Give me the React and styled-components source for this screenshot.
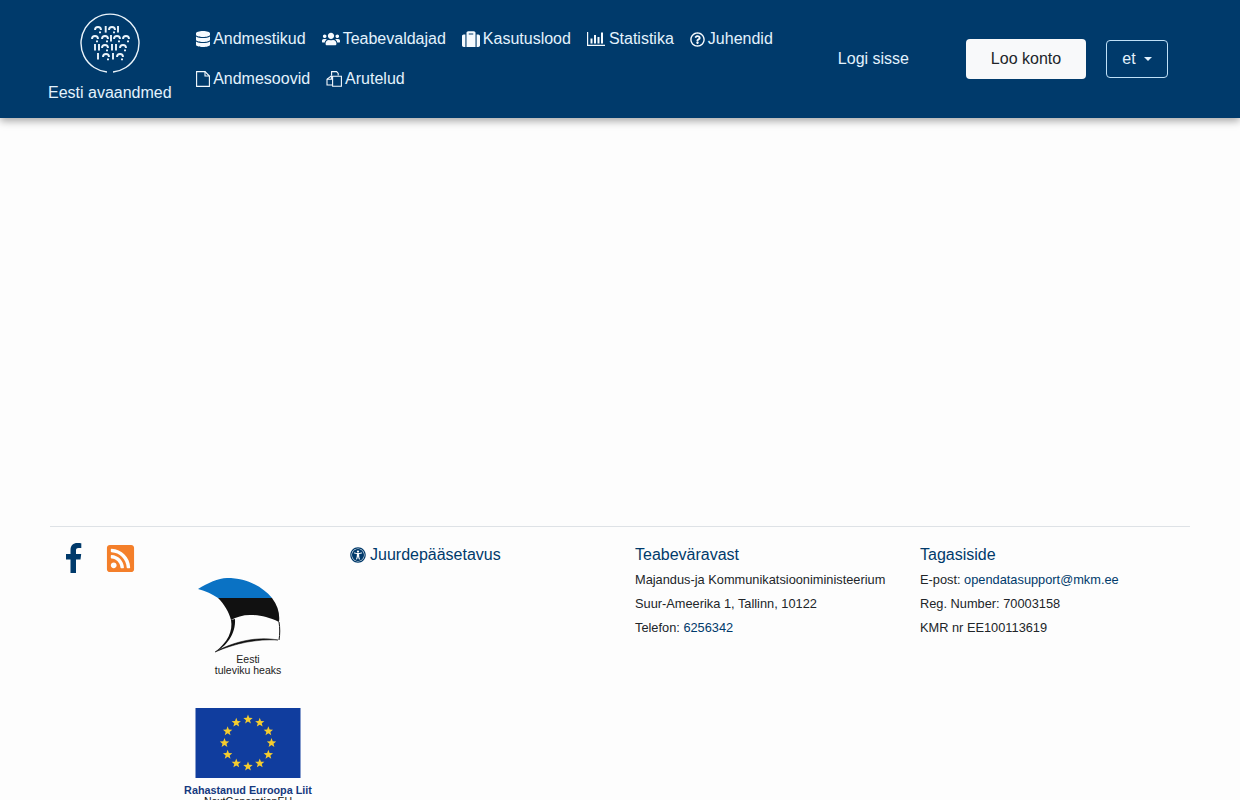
import React from "react";
import styled, { createGlobalStyle } from "styled-components";
import {
  FaDatabase,
  FaUsers,
  FaSuitcase,
  FaRegQuestionCircle,
  FaRssSquare,
  FaUniversalAccess,
} from "react-icons/fa";

const GlobalStyle = createGlobalStyle`
  html, body {
    margin: 0;
    padding: 0;
    background: #fdfdfd;
    font-family: "Liberation Sans", Arial, sans-serif;
    font-size: 16px;
    color: #212529;
  }
`;

const Header = styled.header`
  display: flex;
  align-items: center;
  height: 118px;
  padding: 0 72px 0 48px;
  background: #003a6b;
  box-shadow: 0 3px 8px rgba(0, 0, 0, 0.35);
  position: relative;
`;

const Brand = styled.a`
  display: flex;
  flex-direction: column;
  align-items: center;
  align-self: flex-start;
  gap: 8px;
  padding-top: 13px;
  color: #e3f2fd;
  white-space: nowrap;
`;

const BrandName = styled.span`
  line-height: 24px;
`;

const Nav = styled.nav`
  display: flex;
  flex-wrap: wrap;
  width: 630px;
  margin-left: 16.5px;
`;

const NavItem = styled.a`
  display: flex;
  align-items: center;
  gap: 3px;
  height: 40px;
  padding: 0 8px;
  color: #e3f2fd;
  white-space: nowrap;

  svg {
    color: #f5fafe;
  }
`;

const DatabaseIcon = styled(FaDatabase)`
  width: 14px;
  height: 16px;
`;

const Actions = styled.div`
  display: flex;
  align-items: center;
  margin-left: 20.5px;
`;

const Login = styled.a`
  color: #e3f2fd;
  margin-right: 57px;
  white-space: nowrap;
`;

const Signup = styled.a`
  display: flex;
  align-items: center;
  justify-content: center;
  width: 120px;
  height: 40px;
  margin-right: 20px;
  border-radius: 4px;
  background: #f8f9fa;
  color: #212529;
`;

const Lang = styled.button`
  display: flex;
  align-items: center;
  justify-content: center;
  gap: 8px;
  width: 62px;
  height: 38px;
  border: 1px solid #bfe0f7;
  border-radius: 4px;
  background: transparent;
  color: #e3f2fd;
  font: inherit;

  &::after {
    content: "";
    border-top: 4.8px solid currentColor;
    border-left: 4.8px solid transparent;
    border-right: 4.8px solid transparent;
  }
`;

const Main = styled.main`
  height: 408px;
`;

const Footer = styled.footer`
  display: grid;
  grid-template-columns: repeat(4, 285px);
  width: 1140px;
  margin: 0 auto;
  border-top: 1px solid #dee2e6;
`;

const SideColumn = styled.div`
  padding: 15px 0 0 16px;
`;

const Social = styled.div`
  display: flex;
  align-items: center;
  gap: 23px;
  height: 32px;
`;

const FacebookLink = styled.a`
  display: flex;
  color: #003a6b;
`;

const RssLink = styled.a`
  display: flex;
  color: #f47f2a;
`;

const Logos = styled.div`
  display: flex;
  flex-direction: column;
  align-items: center;
  width: 130px;
  margin: 2px 0 0 117px;
  gap: 32px;
`;

const Column = styled.div`
  padding: 16px 15px 0;
`;

const ColumnTitle = styled.a`
  display: flex;
  align-items: center;
  gap: 4px;
  height: 24px;
  margin-bottom: 1px;
  color: #003a6b;
`;

const Line = styled.div`
  font-size: 12.8px;
  line-height: 24px;
`;

const LineLink = styled.a`
  color: #003a6b;
`;

const glyphRows = [
  { y: 13, hooks: [15, 29], bars: [25.7, 38] },
  { y: 22, hooks: [12, 22, 34, 43], bars: [31] },
  { y: 31, hooks: [22, 40], bars: [15, 19, 32, 36] },
  { y: 40, hooks: [23, 37], bars: [18, 33] },
];

function LogoMark() {
  return (
    <svg width="60" height="60" viewBox="0 0 60 60" fill="none" stroke="#eaf4fb">
      <path d="M27 59 A29 29 0 1 1 33 59" strokeWidth="1.4" />
      <g strokeWidth="1.9">
        {glyphRows.map((row) => (
          <g key={row.y}>
            {row.hooks.map((x) => (
              <path key={x} d={`M${x} ${row.y + 4} a3 3 0 0 1 6 0 M${x + 4} ${row.y + 6.4} h2`} />
            ))}
            {row.bars.map((x) => (
              <path key={x} d={`M${x} ${row.y} v6.6`} />
            ))}
          </g>
        ))}
      </g>
    </svg>
  );
}

function ChartIcon() {
  return (
    <svg width="19" height="14" viewBox="0 0 19 14" fill="currentColor">
      <path d="M0 0h1.2v12.7H18V14H0z" />
      <path d="M3.5 6.5h2v5h-2zM7 3h2v8.5H7zM10.5 5h2v6.5h-2zM14 0.5h2v11h-2z" />
    </svg>
  );
}

function FileIcon() {
  return (
    <svg width="14" height="16" viewBox="0 0 14 16" fill="none" stroke="currentColor" strokeWidth="1.1">
      <path d="M0.6 0.6h8.4l4.4 4.4v10.4H0.6z" />
      <path d="M9 0.6v4.4h4.4" />
    </svg>
  );
}

function CopyIcon() {
  return (
    <svg width="16" height="16" viewBox="0 0 16 16" fill="none" stroke="currentColor" strokeWidth="1.1">
      <path d="M5.6 4.6V0.6h5l1.6 1.8v2" />
      <path d="M5.6 4.6L1 8.2v5.8h5" />
      <path d="M5.4 4.8v3.4H1" />
      <path d="M6.6 5.2h8.8v10H6.6z" />
    </svg>
  );
}

function FacebookIcon() {
  return (
    <svg width="16" height="30" viewBox="0 0 16 30" fill="currentColor">
      <path d="M4.5 30V16.5H0V11h4.5V7C4.5 2.5 7.3 0 11.3 0c1.9 0 3.5.1 4 .2V5h-2.8C10.3 5 10 6 10 7.5V11h5.2l-.7 5.5H10V30z" />
    </svg>
  );
}

function SailLogo() {
  return (
    <svg width="100" height="100" viewBox="0 0 100 100">
      <path d="M0 13C10 7 20 2 29 2C48 2 64 10 74 22L20 22C14 18 8 15 0 13Z" fill="#0a72c4" />
      <path d="M20 22L74 22C80 30 82 38 81 46C70 41 62 39 52 39C45 39 38 41 33 44C31 36 26 28 20 22Z" fill="#111" />
      <path d="M81 46C82 52 82 58 81 64" fill="none" stroke="#111" strokeWidth="1" />
      <path d="M33 44C35 55 30 66 17 76C28 71 38 58 37 43Z" fill="#111" />
      <path d="M17 76C35 66 58 60 80 64C58 63 38 67 17 76Z" fill="#111" stroke="#111" strokeWidth="0.5" />
      <text x="50" y="87" textAnchor="middle" fontSize="10.5" fill="#222" fontFamily="Liberation Sans, sans-serif">Eesti</text>
      <text x="50" y="98" textAnchor="middle" fontSize="10.5" fill="#222" fontFamily="Liberation Sans, sans-serif">tuleviku heaks</text>
    </svg>
  );
}

function EuLogo() {
  const stars = Array.from({ length: 12 }, (_, i) => {
    const a = (i * Math.PI) / 6;
    return [52.5 + 23.5 * Math.sin(a), 35 - 23.5 * Math.cos(a)];
  });
  const star = Array.from({ length: 10 }, (_, i) => {
    const a = (i * Math.PI) / 5;
    const r = i % 2 ? 2.1 : 4.9;
    return `${(r * Math.sin(a)).toFixed(2)},${(-r * Math.cos(a)).toFixed(2)}`;
  }).join(" ");
  return (
    <svg width="130" height="100" viewBox="-12.5 0 130 100">
      <rect width="105" height="70" fill="#103d9e" />
      {stars.map(([x, y], i) => (
        <polygon key={i} points={star} transform={`translate(${x} ${y})`} fill="#f5cc2e" />
      ))}
      <text x="52.5" y="86" textAnchor="middle" fontSize="10.8" fontWeight="700" fill="#15397f" fontFamily="Liberation Sans, sans-serif">
        Rahastanud Euroopa Liit
      </text>
      <text x="52.5" y="96.5" textAnchor="middle" fontSize="10.5" fill="#111" fontFamily="Liberation Sans, sans-serif">
        NextGenerationEU
      </text>
    </svg>
  );
}

export default function App() {
  return (
    <>
      <GlobalStyle />
      <Header>
        <Brand>
          <LogoMark />
          <BrandName>Eesti avaandmed</BrandName>
        </Brand>
        <Nav>
          <NavItem><DatabaseIcon />Andmestikud</NavItem>
          <NavItem><FaUsers size={18} />Teabevaldajad</NavItem>
          <NavItem><FaSuitcase size={18} />Kasutuslood</NavItem>
          <NavItem><ChartIcon />Statistika</NavItem>
          <NavItem><FaRegQuestionCircle size={15} />Juhendid</NavItem>
          <NavItem><FileIcon />Andmesoovid</NavItem>
          <NavItem><CopyIcon />Arutelud</NavItem>
        </Nav>
        <Actions>
          <Login>Logi sisse</Login>
          <Signup>Loo konto</Signup>
          <Lang>et</Lang>
        </Actions>
      </Header>
      <Main />
      <Footer>
        <SideColumn>
          <Social>
            <FacebookLink><FacebookIcon /></FacebookLink>
            <RssLink><FaRssSquare size={31} /></RssLink>
          </Social>
          <Logos>
            <SailLogo />
            <EuLogo />
          </Logos>
        </SideColumn>
        <Column>
          <ColumnTitle><FaUniversalAccess size={16} />Juurdepääsetavus</ColumnTitle>
        </Column>
        <Column>
          <ColumnTitle>Teabeväravast</ColumnTitle>
          <Line>Majandus-ja Kommunikatsiooniministeerium</Line>
          <Line>Suur-Ameerika 1, Tallinn, 10122</Line>
          <Line>Telefon: <LineLink>6256342</LineLink></Line>
        </Column>
        <Column>
          <ColumnTitle>Tagasiside</ColumnTitle>
          <Line>E-post: <LineLink>opendatasupport@mkm.ee</LineLink></Line>
          <Line>Reg. Number: 70003158</Line>
          <Line>KMR nr EE100113619</Line>
        </Column>
      </Footer>
    </>
  );
}
